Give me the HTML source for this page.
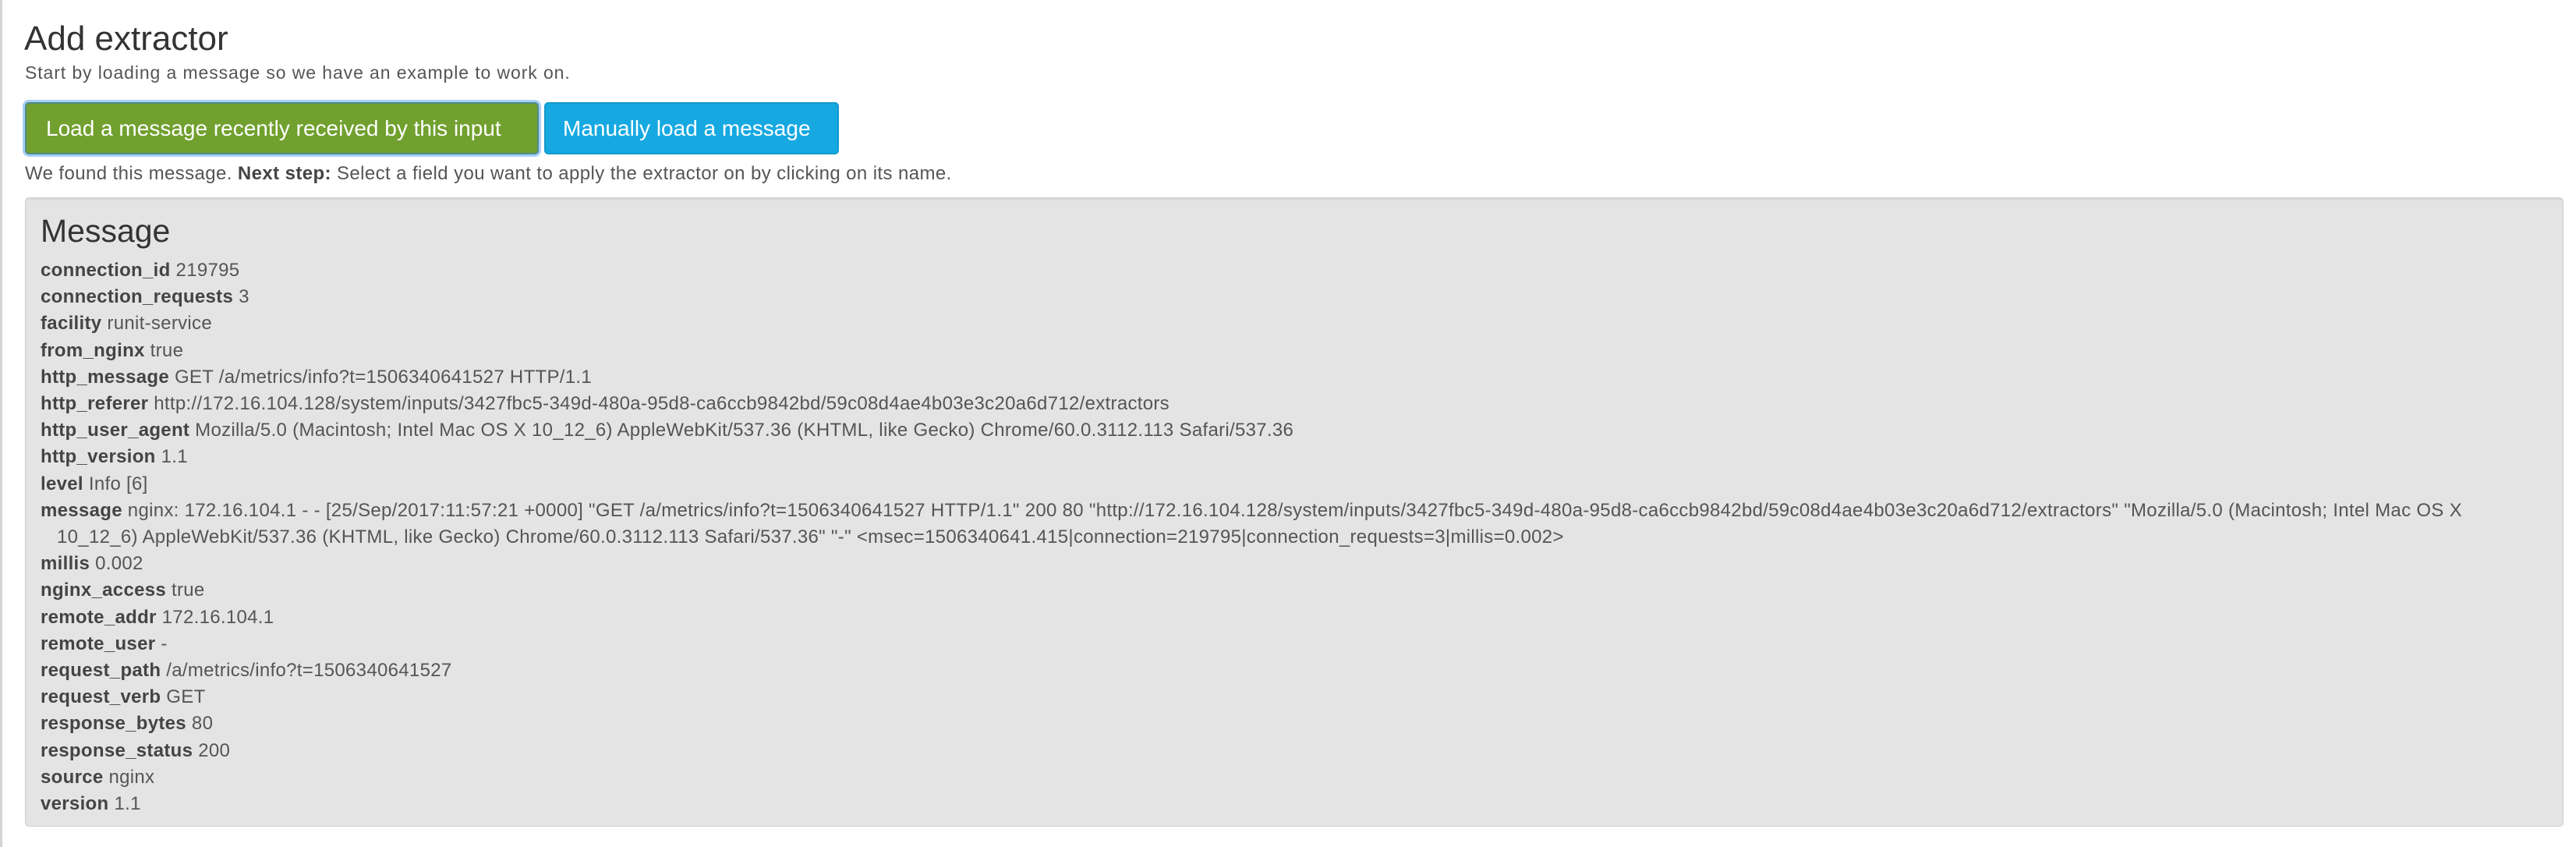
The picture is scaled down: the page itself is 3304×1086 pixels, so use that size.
<!DOCTYPE html>
<html><head><meta charset="utf-8">
<style>
html,body{margin:0;padding:0;background:#fff;}
body{width:3304px;height:1086px;overflow:hidden;position:relative;font-family:"Liberation Sans",sans-serif;color:#555;}
.lb{position:absolute;left:0;top:0;width:3px;height:1086px;background:#d4d4d4;}
h1{position:absolute;left:31px;top:22px;margin:0;font-weight:normal;font-size:44px;line-height:56px;color:#333;}
.sub{position:absolute;left:32px;top:78px;font-size:23px;line-height:30px;letter-spacing:0.9px;}
.btn{position:absolute;top:131px;height:67px;box-sizing:border-box;color:#fff;font-size:28px;line-height:63px;border-radius:5px;white-space:nowrap;}
.g{left:32px;width:659px;background:#71a02f;border:2px solid #4f8a8a;padding-left:25px;box-shadow:0 0 0 3px #a9d0f5;}
.b{left:698px;width:378px;background:#16a9e1;border:2px solid #1399cc;padding-left:22px;}
.found{position:absolute;left:32px;top:207px;font-size:24px;line-height:32px;letter-spacing:0.4px;white-space:nowrap;}
.found b{color:#444;}
.well{position:absolute;left:32px;top:253px;width:3256px;height:807px;box-sizing:border-box;background:#e3e4e3;border:1px solid #cfd0cf;border-radius:5px;box-shadow:inset 0 2px 2px rgba(0,0,0,.06);}
h2{position:absolute;left:19px;top:16px;margin:0;font-weight:normal;font-size:41px;line-height:52px;color:#333;}
.rows{position:absolute;left:19px;top:76px;font-size:24px;line-height:34.2px;letter-spacing:0.3px;white-space:nowrap;}
.rows b{color:#444;}
.ind{padding-left:21px;}
</style></head><body>
<div class="lb"></div>
<h1>Add extractor</h1>
<div class="sub">Start by loading a message so we have an example to work on.</div>
<div class="btn g">Load a message recently received by this input</div>
<div class="btn b">Manually load a message</div>
<div class="found">We found this message. <b>Next step:</b> Select a field you want to apply the extractor on by clicking on its name.</div>
<div class="well">
<h2>Message</h2>
<div class="rows">
<div><b>connection_id</b> 219795</div>
<div><b>connection_requests</b> 3</div>
<div><b>facility</b> runit-service</div>
<div><b>from_nginx</b> true</div>
<div><b>http_message</b> GET /a/metrics/info?t=1506340641527 HTTP/1.1</div>
<div><b>http_referer</b> http://172.16.104.128/system/inputs/3427fbc5-349d-480a-95d8-ca6ccb9842bd/59c08d4ae4b03e3c20a6d712/extractors</div>
<div><b>http_user_agent</b> Mozilla/5.0 (Macintosh; Intel Mac OS X 10_12_6) AppleWebKit/537.36 (KHTML, like Gecko) Chrome/60.0.3112.113 Safari/537.36</div>
<div><b>http_version</b> 1.1</div>
<div><b>level</b> Info [6]</div>
<div><b>message</b> nginx: 172.16.104.1 - - [25/Sep/2017:11:57:21 +0000] "GET /a/metrics/info?t=1506340641527 HTTP/1.1" 200 80 "http://172.16.104.128/system/inputs/3427fbc5-349d-480a-95d8-ca6ccb9842bd/59c08d4ae4b03e3c20a6d712/extractors" "Mozilla/5.0 (Macintosh; Intel Mac OS X</div>
<div class="ind">10_12_6) AppleWebKit/537.36 (KHTML, like Gecko) Chrome/60.0.3112.113 Safari/537.36" "-" &lt;msec=1506340641.415|connection=219795|connection_requests=3|millis=0.002&gt;</div>
<div><b>millis</b> 0.002</div>
<div><b>nginx_access</b> true</div>
<div><b>remote_addr</b> 172.16.104.1</div>
<div><b>remote_user</b> -</div>
<div><b>request_path</b> /a/metrics/info?t=1506340641527</div>
<div><b>request_verb</b> GET</div>
<div><b>response_bytes</b> 80</div>
<div><b>response_status</b> 200</div>
<div><b>source</b> nginx</div>
<div><b>version</b> 1.1</div>
</div>
</div>
</body></html>
